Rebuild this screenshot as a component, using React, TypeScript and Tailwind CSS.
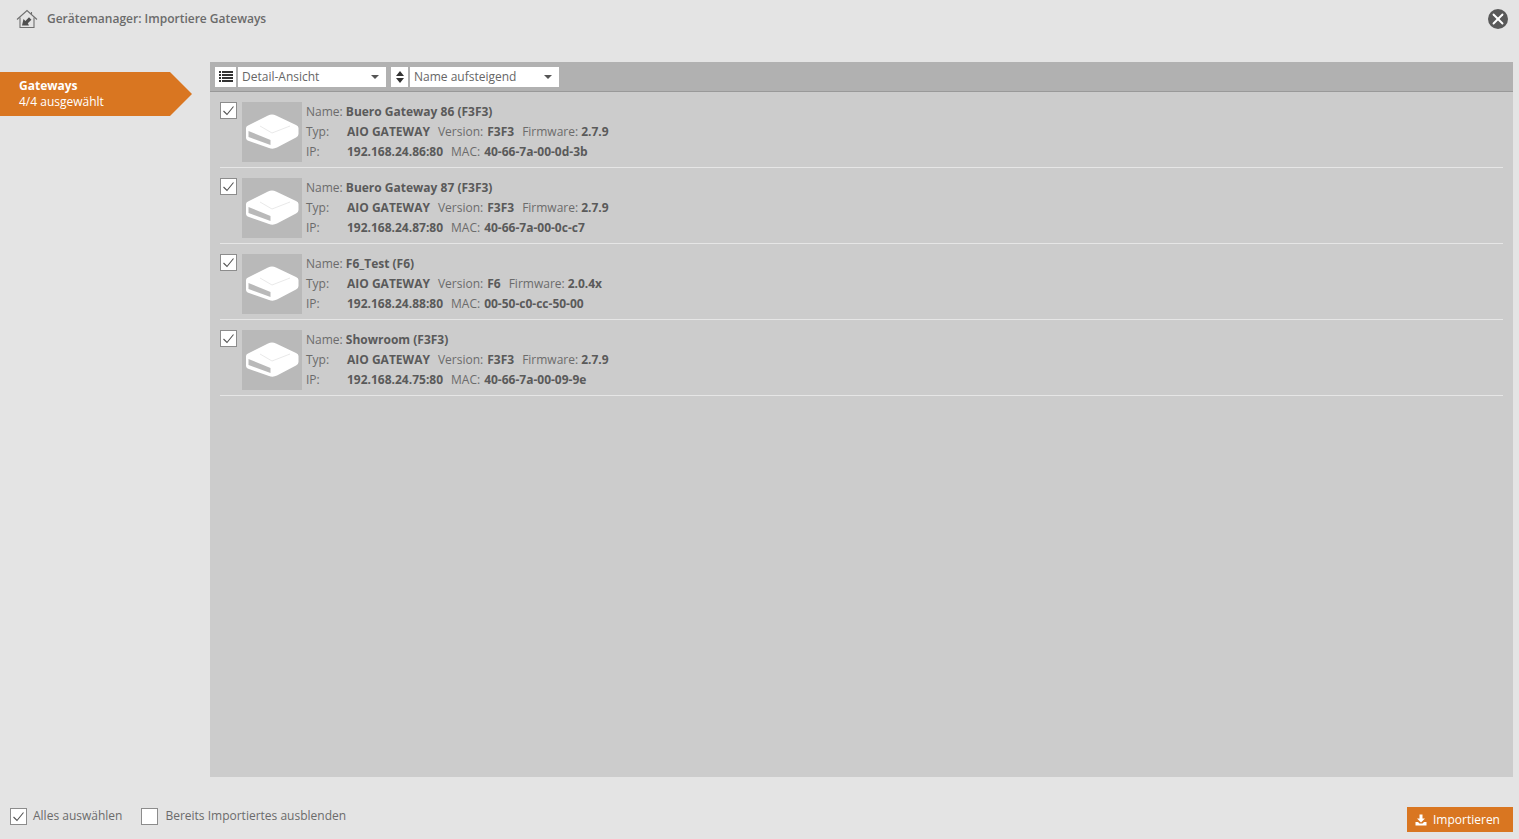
import { X } from 'lucide-react';

interface Gateway {
  name: string;
  version: string;
  firmware: string;
  ip: string;
  mac: string;
}

const gateways: Gateway[] = [
  { name: 'Buero Gateway 86 (F3F3)', version: 'F3F3', firmware: '2.7.9', ip: '192.168.24.86:80', mac: '40-66-7a-00-0d-3b' },
  { name: 'Buero Gateway 87 (F3F3)', version: 'F3F3', firmware: '2.7.9', ip: '192.168.24.87:80', mac: '40-66-7a-00-0c-c7' },
  { name: 'F6_Test (F6)', version: 'F6', firmware: '2.0.4x', ip: '192.168.24.88:80', mac: '00-50-c0-cc-50-00' },
  { name: 'Showroom (F3F3)', version: 'F3F3', firmware: '2.7.9', ip: '192.168.24.75:80', mac: '40-66-7a-00-09-9e' },
];

function Checkbox({ checked, className = '' }: { checked: boolean; className?: string }) {
  return (
    <span className={`flex w-[17px] h-[17px] shrink-0 items-center justify-center border border-[#8c8c8c] bg-white ${className}`}>
      {checked && (
        <svg viewBox="0 0 15 15" className="w-[15px] h-[15px]" fill="none" stroke="#555" strokeWidth="1.1">
          <path d="M2.5 8 L6 11.5 L12.5 3.5" />
        </svg>
      )}
    </span>
  );
}

function HomeIcon() {
  return (
    <svg viewBox="0 0 22 20" className="w-[22px] h-[20px]" fill="none" stroke="#6f6f6f" strokeWidth="1.1">
      <path d="M1 10.5 L11 1.5 L21 10.5" />
      <path d="M15.5 3 V5.5" />
      <path d="M4 8.5 V18.5 H18 V8.5" />
      <path d="M6 16.5 L7.5 10 L9.4 11.9 L13 8.3 L15.4 10.7 L11.8 14.3 L13 16.5 Z" fill="#4f4f4f" stroke="none" />
    </svg>
  );
}

function DeviceIcon() {
  return (
    <svg viewBox="0 0 60 60" className="w-[60px] h-[60px]">
      <path
        d="M4 26 Q4 24 7 23 L26 13.5 Q30 11.5 34 13.5 L54 23 Q56.5 24 56.5 26 V32 Q56.5 34 54 35.5 L35 45.5 Q31 47.5 27 46 L7 39 Q4 38 4 35.5 Z"
        fill="#fff"
      />
      <path d="M6.5 29 L28.5 38 V43 L6.5 35 Z" fill="#b9b9b9" />
      <path d="M18 24 L30 31 L48 24" fill="none" stroke="#e0e0e0" strokeWidth="0.7" />
    </svg>
  );
}

function ImportIcon() {
  return (
    <svg viewBox="0 0 12 12" className="w-3 h-3" fill="#fff">
      <path d="M4.5 0.5 H7.5 V4.5 H10 L6 8.5 L2 4.5 H4.5 Z" />
      <path d="M0.5 8 H3 L4.5 9.5 H7.5 L9 8 H11.5 V11.5 H0.5 Z" />
    </svg>
  );
}

function ToolbarSelect({ label, className }: { label: string; className: string }) {
  return (
    <div className={`flex h-5 items-center justify-between bg-white pl-1 pr-[7px] ${className}`}>
      <span className="text-[12px] text-[#666]">{label}</span>
      <svg viewBox="0 0 8 4" className="w-2 h-1" fill="#555">
        <path d="M0 0 H8 L4 4 Z" />
      </svg>
    </div>
  );
}

function GatewayRow({ gateway }: { gateway: Gateway }) {
  return (
    <div className="flex h-[76px] border-b border-[#e6e6e6] pt-[10px]">
      <Checkbox checked />
      <div className="ml-[5px] flex h-[60px] w-[60px] shrink-0 items-center justify-center bg-[#b9b9b9]">
        <DeviceIcon />
      </div>
      <div className="ml-[4px] text-[12px] leading-5 text-[#6b6b6b]">
        <div>
          Name: <b className="font-bold text-[#5a5a5a]">{gateway.name}</b>
        </div>
        <div className="flex">
          <span className="w-[41px]">Typ:</span>
          <b className="font-bold text-[#5a5a5a]">AIO GATEWAY</b>
          <span className="ml-2">Version:</span>
          <b className="ml-1 font-bold text-[#5a5a5a]">{gateway.version}</b>
          <span className="ml-2">Firmware:</span>
          <b className="ml-[3px] font-bold text-[#5a5a5a]">{gateway.firmware}</b>
        </div>
        <div className="flex">
          <span className="w-[41px]">IP:</span>
          <b className="font-bold text-[#5a5a5a]">{gateway.ip}</b>
          <span className="ml-2">MAC:</span>
          <b className="ml-1 font-bold text-[#5a5a5a]">{gateway.mac}</b>
        </div>
      </div>
    </div>
  );
}

export default function App() {
  return (
    <div className="flex h-screen flex-col overflow-hidden bg-[#e4e4e4] font-['Open_Sans',sans-serif]">
      {/* Header */}
      <div className="flex h-[62px] shrink-0 items-start justify-between pl-4 pr-[11px] pt-[9px]">
        <div className="flex items-center gap-[9px]">
          <HomeIcon />
          <span className="text-[12px] font-semibold text-[#6b6b6b]">Gerätemanager: Importiere Gateways</span>
        </div>
        <span className="flex h-5 w-5 items-center justify-center rounded-full bg-[#595959]">
          <X className="h-[18px] w-[18px] text-white" strokeWidth={2.5} />
        </span>
      </div>

      <div className="flex min-h-0 flex-1">
        {/* Sidebar */}
        <div className="w-[210px] shrink-0 pt-[10px]">
          <div className="flex h-[44px] w-[192px] flex-col justify-center bg-[#d97621] pl-[19px] text-[12px] leading-4 text-white [clip-path:polygon(0_0,170px_0,192px_50%,170px_100%,0_100%)]">
            <b className="font-bold">Gateways</b>
            <span>4/4 ausgewählt</span>
          </div>
        </div>

        {/* List panel */}
        <div className="mr-[6px] flex min-w-0 flex-1 flex-col bg-[#cccccc]">
          <div className="flex h-[30px] shrink-0 items-center border-b border-[#999] bg-[#b1b1b1] pl-[5px]">
            <span className="flex h-5 w-[21px] items-center justify-center bg-white">
              <svg viewBox="0 0 14 11" className="w-[14px] h-[11px]" fill="#333">
                <path d="M0 0h2v2H0zM3 0h11v2H3zM0 3h2v2H0zM3 3h11v2H3zM0 6h2v2H0zM3 6h11v2H3zM0 9h2v2H0zM3 9h11v2H3z" />
              </svg>
            </span>
            <ToolbarSelect label="Detail-Ansicht" className="ml-[2px] w-[148px]" />
            <span className="ml-[5px] flex h-5 w-[17px] items-center justify-center bg-white">
              <svg viewBox="0 0 8 12" className="w-2 h-3" fill="#333">
                <path d="M4 0 L8 5 H0 Z M0 7 H8 L4 12 Z" />
              </svg>
            </span>
            <ToolbarSelect label="Name aufsteigend" className="ml-[2px] w-[149px]" />
          </div>
          <div className="pl-[10px] pr-[10px]">
            {gateways.map((g) => (
              <GatewayRow key={g.ip} gateway={g} />
            ))}
          </div>
        </div>
      </div>

      {/* Footer */}
      <div className="flex h-[62px] shrink-0 items-start justify-between pl-[10px] pr-[6px] pt-[30px] text-[12px] text-[#6b6b6b]">
        <div className="flex items-center">
          <Checkbox checked />
          <span className="ml-[6px]">Alles auswählen</span>
          <Checkbox checked={false} className="ml-[19px]" />
          <span className="ml-[7px]">Bereits Importiertes ausblenden</span>
        </div>
        <button className="flex h-[25px] w-[106px] items-center gap-[6px] bg-[#d97621] pl-2 text-white">
          <ImportIcon />
          Importieren
        </button>
      </div>
    </div>
  );
}
